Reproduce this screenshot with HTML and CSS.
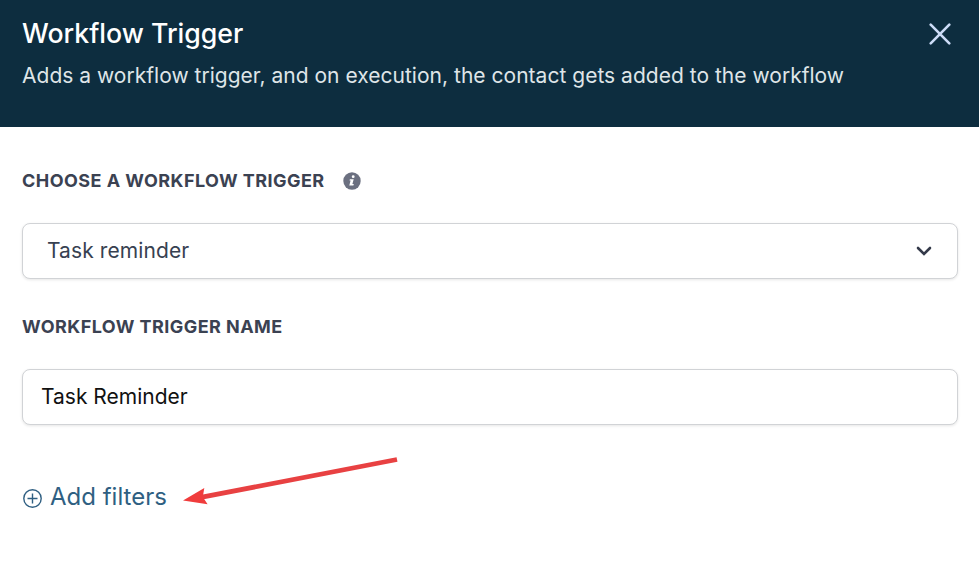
FILE: index.html
```html
<!DOCTYPE html>
<html lang="en">
<head>
  <meta charset="UTF-8">
  <meta name="viewport" content="width=device-width, initial-scale=1.0">
  <title>Workflow Trigger</title>
  <link rel="stylesheet" href="styles.css">
</head>
<body>

  <header class="header">
    <div>
      <h1>Workflow Trigger</h1>
      <p>Adds a workflow trigger, and on execution, the contact gets added to the workflow</p>
    </div>
    <button class="close" aria-label="Close">
      <svg width="22" height="22" viewBox="0 0 22 22"><path d="M1.700 1.700l18.600 18.600M20.300 1.700L1.700 20.300" /></svg>
    </button>
  </header>

  <main class="content">
    <div class="label">
      <span>CHOOSE A WORKFLOW TRIGGER</span>
      <svg class="info" width="18" height="18" viewBox="0 0 18 18">
        <circle cx="9" cy="9" r="8.7" />
        <circle class="info-mark" cx="10.200" cy="4.700" r="1.4" />
        <path class="info-mark" d="M6.900 7.200h3.800l-1.300 4.900h1.400l-.4 1.400H6.300l1.300-4.900H6.500z" />
      </svg>
    </div>
    <button class="field select">
      <span>Task reminder</span>
      <svg width="16" height="10" viewBox="0 0 16 10"><path d="M2 2l6 6 6-6" /></svg>
    </button>

    <label class="label" for="triggerName"><span>WORKFLOW TRIGGER NAME</span></label>
    <input class="field name" id="triggerName" type="text" value="Task Reminder">

    <div class="filters">
      <button class="add-filters">
        <svg width="19" height="19" viewBox="0 0 19 19"><circle cx="9.500" cy="9.500" r="8.700" /><path d="M9.500 4.500v10M4.500 9.500h10" /></svg>
        <span>Add filters</span>
      </button>
      <svg class="arrow" width="218" height="54" viewBox="0 0 218 54">
        <path class="arrow-line" d="M215 6.500L20 44.200" />
        <path class="arrow-head" d="M1 47.500l21.300-12.600-1.500 9.100 4.800 7.200z" />
      </svg>
    </div>
  </main>

</body>
</html>
```

FILE: styles.css
```css
* {
  box-sizing: border-box;
}

body {
  margin: 0;
  background: #fff;
  color: #374151;
  font-family: Inter, "Liberation Sans", sans-serif;
}

button {
  padding: 0;
  border: 0;
  background: none;
  color: inherit;
  font-family: inherit;
  cursor: pointer;
}

svg {
  display: block;
  fill: none;
}

.header {
  display: flex;
  justify-content: space-between;
  align-items: flex-start;
  height: 127px;
  padding: 15px 28px 0 22px;
  background: #0d2d3f;
}

h1 {
  margin: 0;
  color: #fff;
  font-size: 26.7px;
  font-weight: 500;
  line-height: 36px;
}

.header p {
  margin: 9px 0 0;
  color: #dfe5e8;
  font-size: 21px;
  line-height: 32px;
  letter-spacing: 0.02px;
}

.close {
  margin-top: 8px;
}

.close svg {
  stroke: #cddcf7;
  stroke-width: 2.6;
  stroke-linecap: round;
}

.content {
  padding: 40px 21px 0 22px;
}

.label {
  display: flex;
  align-items: center;
  gap: 18px;
  height: 28px;
  color: #3b4252;
  font-size: 18px;
  font-weight: 700;
  letter-spacing: 0.45px;
}

.label span {
  padding-bottom: 2px;
}

.info {
  fill: #6b7080;
}

.info-mark {
  fill: #fff;
}

.field {
  display: flex;
  width: 100%;
  height: 56px;
  margin: 28px 0 34px;
  border: 1px solid #d1d3d6;
  border-radius: 8px;
  background: #fff;
  box-shadow: 0 1px 3px rgba(0, 0, 0, 0.1);
  font-family: inherit;
  font-size: 21px;
}

.select {
  justify-content: space-between;
  align-items: center;
  padding: 0 25px 0 24px;
}

.select span {
  padding-bottom: 2px;
  letter-spacing: 0.1px;
}

.select svg {
  stroke: #343a4a;
  stroke-width: 2.6;
  stroke-linecap: round;
}

.name {
  padding: 0 18px 2px;
  color: #111;
}

.filters {
  display: flex;
  align-items: flex-start;
  gap: 15px;
}

.add-filters {
  display: flex;
  align-items: center;
  gap: 8px;
  height: 76px;
  padding-left: 1px;
  color: #2f5f82;
  font-size: 24px;
}

.add-filters svg {
  margin-top: 2px;
  stroke: #2f5f82;
  stroke-width: 1.4;
}

.add-filters span {
  padding-bottom: 2px;
}

.arrow {
  margin-top: -6px;
}

.arrow-line {
  stroke: #e84142;
  stroke-width: 4.8;
}

.arrow-head {
  fill: #f03c3c;
}
```
